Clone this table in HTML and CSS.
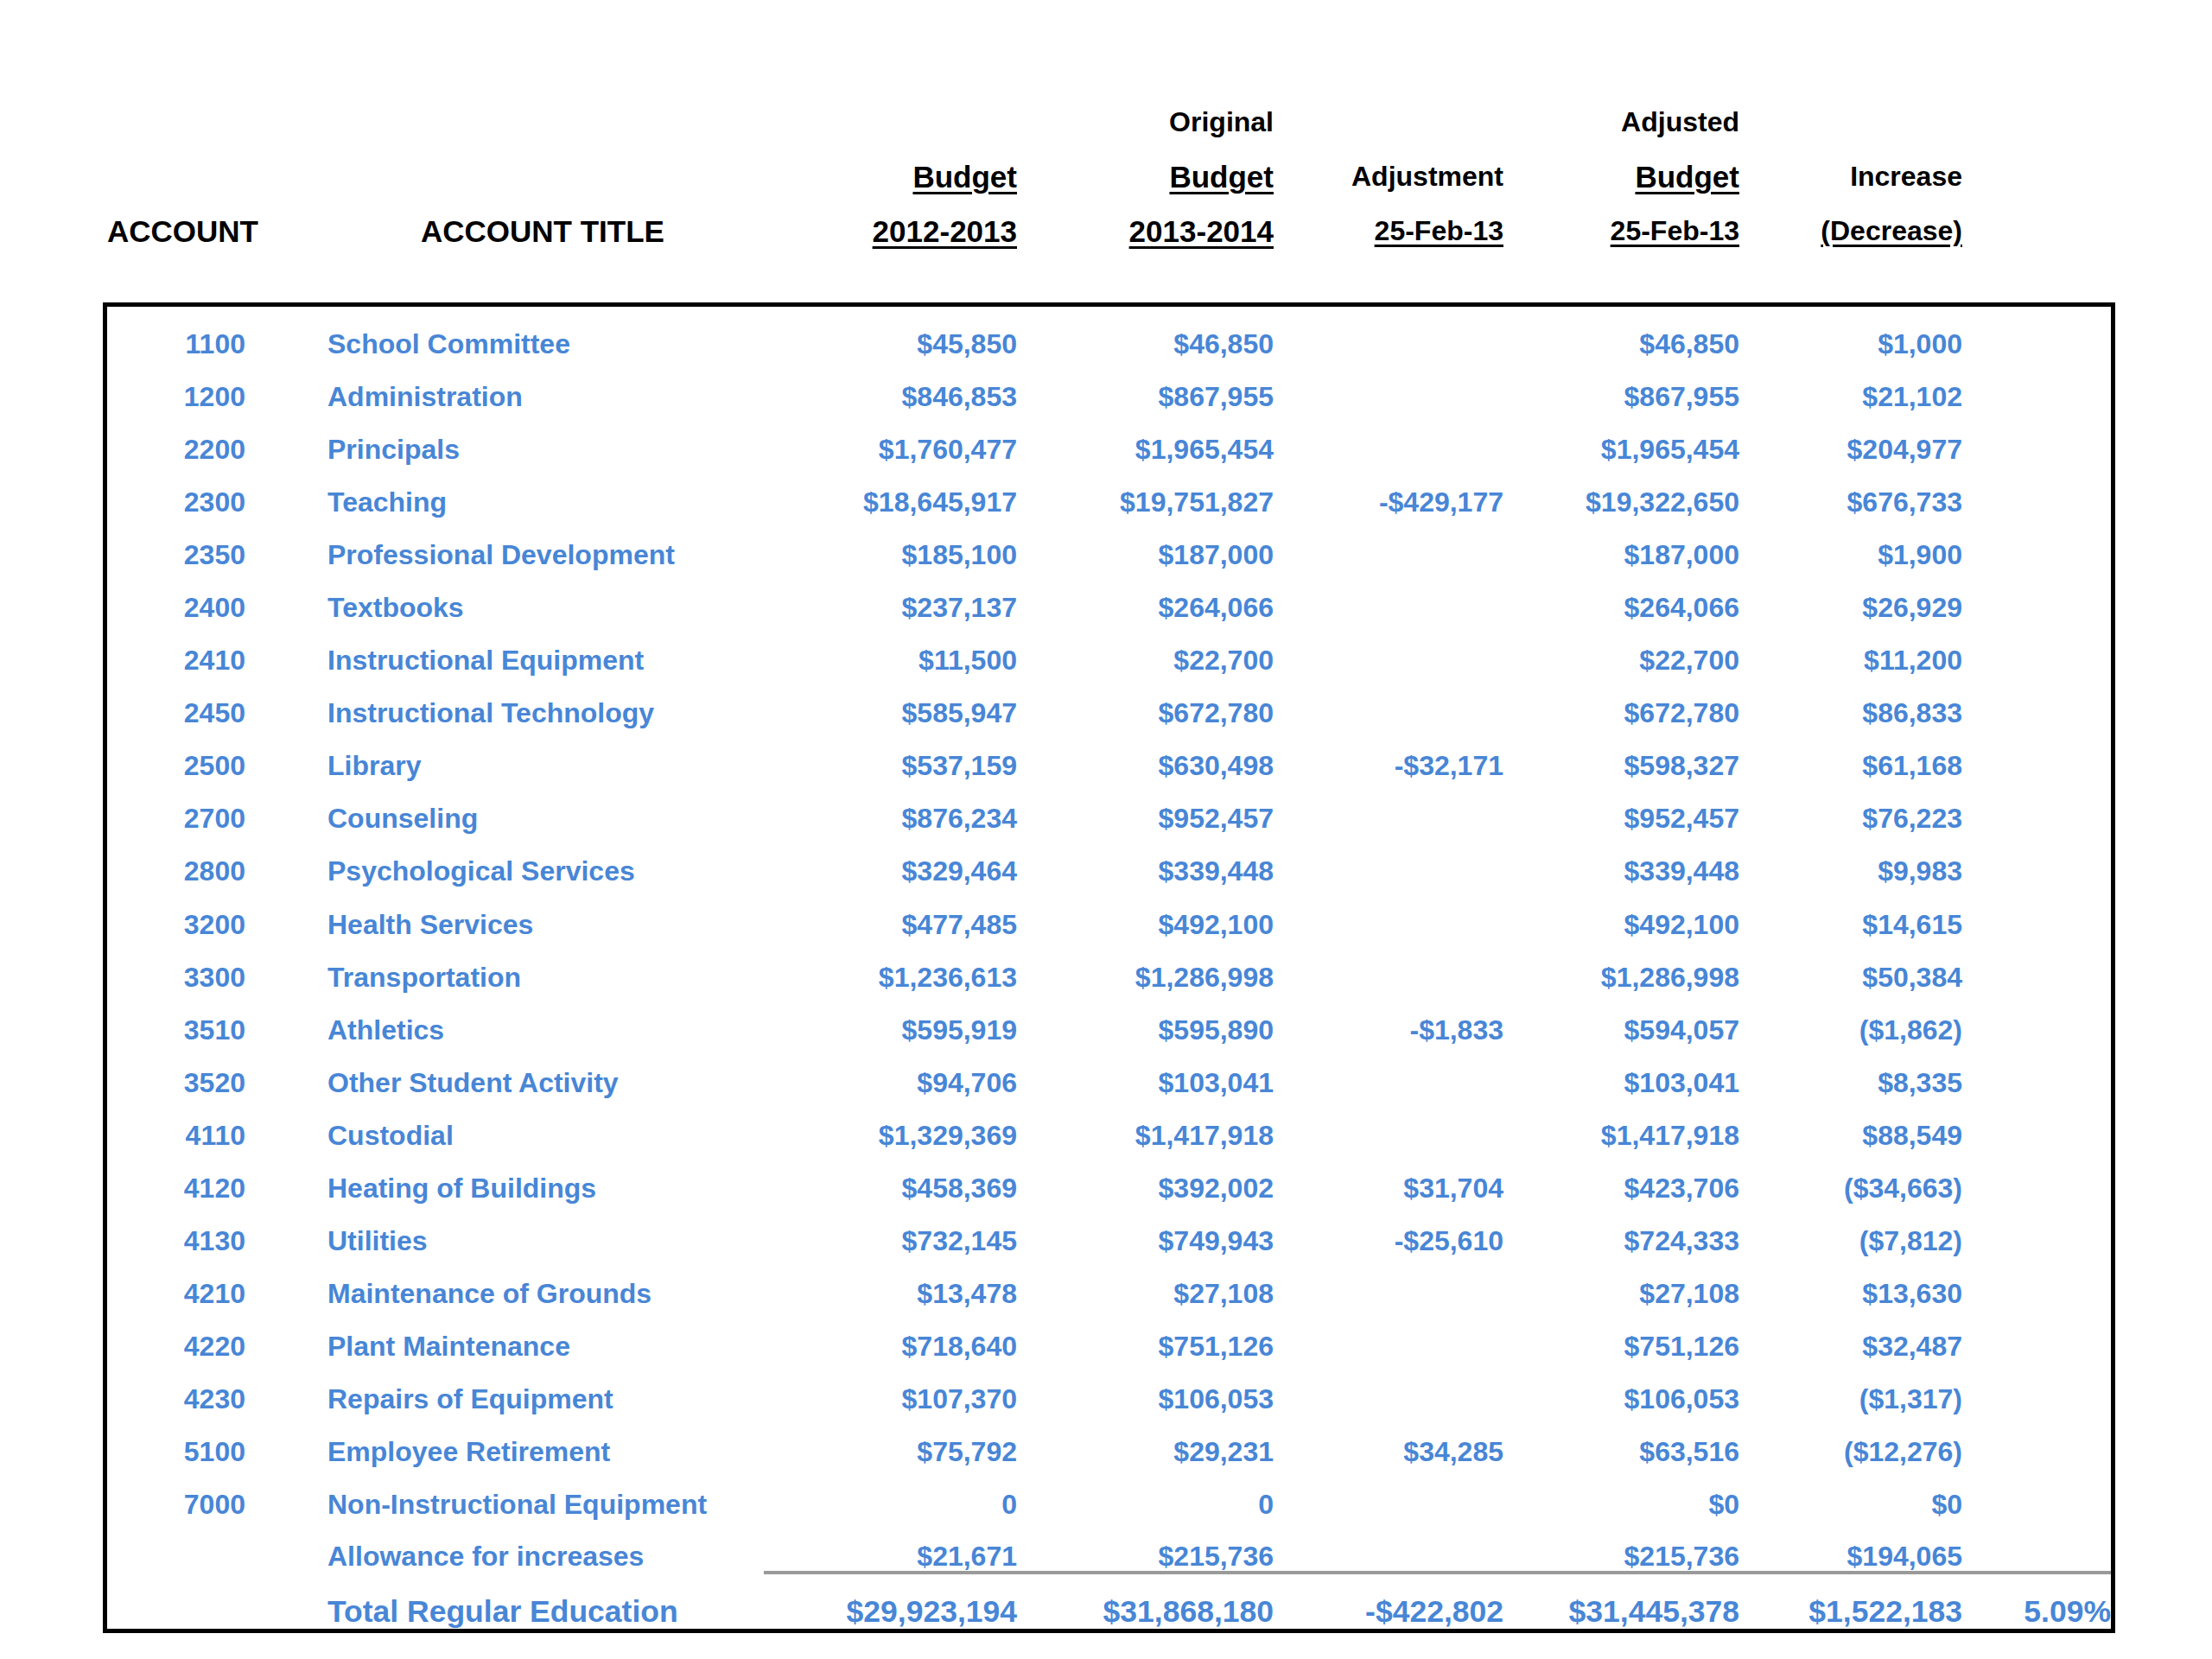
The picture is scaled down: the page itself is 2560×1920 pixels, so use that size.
FILE: index.html
```html
<!DOCTYPE html>
<html lang="en">
<head>
<meta charset="utf-8">
<title>Budget 2013-2014</title>
<link rel="stylesheet" href="styles.css">
</head>
<body>
<div class="page">
  <div class="head">
    <div class="hrow">
      <span></span><span></span><span class="n"></span>
      <span class="n sm">Original</span><span class="n"></span>
      <span class="n sm">Adjusted</span><span class="n"></span><span class="n"></span>
    </div>
    <div class="hrow">
      <span></span><span></span><span class="n"><span class="u">Budget</span></span>
      <span class="n"><span class="u">Budget</span></span><span class="n sm">Adjustment</span>
      <span class="n"><span class="u">Budget</span></span><span class="n sm">Increase</span><span class="n"></span>
    </div>
    <div class="hrow">
      <span>ACCOUNT</span><span class="htitle">ACCOUNT TITLE</span><span class="n"><span class="u">2012-2013</span></span>
      <span class="n"><span class="u">2013-2014</span></span><span class="n sm"><span class="u">25-Feb-13</span></span>
      <span class="n sm"><span class="u">25-Feb-13</span></span><span class="n sm"><span class="u">(Decrease)</span></span><span class="n"></span>
    </div>
  </div>

  <div class="box">
    <div class="row"><span class="acct">1100</span><span class="title">School Committee</span><span class="n">$45,850</span><span class="n">$46,850</span><span class="n"></span><span class="n">$46,850</span><span class="n">$1,000</span><span class="n"></span></div>
    <div class="row"><span class="acct">1200</span><span class="title">Administration</span><span class="n">$846,853</span><span class="n">$867,955</span><span class="n"></span><span class="n">$867,955</span><span class="n">$21,102</span><span class="n"></span></div>
    <div class="row"><span class="acct">2200</span><span class="title">Principals</span><span class="n">$1,760,477</span><span class="n">$1,965,454</span><span class="n"></span><span class="n">$1,965,454</span><span class="n">$204,977</span><span class="n"></span></div>
    <div class="row"><span class="acct">2300</span><span class="title">Teaching</span><span class="n">$18,645,917</span><span class="n">$19,751,827</span><span class="n">-$429,177</span><span class="n">$19,322,650</span><span class="n">$676,733</span><span class="n"></span></div>
    <div class="row"><span class="acct">2350</span><span class="title">Professional Development</span><span class="n">$185,100</span><span class="n">$187,000</span><span class="n"></span><span class="n">$187,000</span><span class="n">$1,900</span><span class="n"></span></div>
    <div class="row"><span class="acct">2400</span><span class="title">Textbooks</span><span class="n">$237,137</span><span class="n">$264,066</span><span class="n"></span><span class="n">$264,066</span><span class="n">$26,929</span><span class="n"></span></div>
    <div class="row"><span class="acct">2410</span><span class="title">Instructional Equipment</span><span class="n">$11,500</span><span class="n">$22,700</span><span class="n"></span><span class="n">$22,700</span><span class="n">$11,200</span><span class="n"></span></div>
    <div class="row"><span class="acct">2450</span><span class="title">Instructional Technology</span><span class="n">$585,947</span><span class="n">$672,780</span><span class="n"></span><span class="n">$672,780</span><span class="n">$86,833</span><span class="n"></span></div>
    <div class="row"><span class="acct">2500</span><span class="title">Library</span><span class="n">$537,159</span><span class="n">$630,498</span><span class="n">-$32,171</span><span class="n">$598,327</span><span class="n">$61,168</span><span class="n"></span></div>
    <div class="row"><span class="acct">2700</span><span class="title">Counseling</span><span class="n">$876,234</span><span class="n">$952,457</span><span class="n"></span><span class="n">$952,457</span><span class="n">$76,223</span><span class="n"></span></div>
    <div class="row"><span class="acct">2800</span><span class="title">Psychological Services</span><span class="n">$329,464</span><span class="n">$339,448</span><span class="n"></span><span class="n">$339,448</span><span class="n">$9,983</span><span class="n"></span></div>
    <div class="row"><span class="acct">3200</span><span class="title">Health Services</span><span class="n">$477,485</span><span class="n">$492,100</span><span class="n"></span><span class="n">$492,100</span><span class="n">$14,615</span><span class="n"></span></div>
    <div class="row"><span class="acct">3300</span><span class="title">Transportation</span><span class="n">$1,236,613</span><span class="n">$1,286,998</span><span class="n"></span><span class="n">$1,286,998</span><span class="n">$50,384</span><span class="n"></span></div>
    <div class="row"><span class="acct">3510</span><span class="title">Athletics</span><span class="n">$595,919</span><span class="n">$595,890</span><span class="n">-$1,833</span><span class="n">$594,057</span><span class="n">($1,862)</span><span class="n"></span></div>
    <div class="row"><span class="acct">3520</span><span class="title">Other Student Activity</span><span class="n">$94,706</span><span class="n">$103,041</span><span class="n"></span><span class="n">$103,041</span><span class="n">$8,335</span><span class="n"></span></div>
    <div class="row"><span class="acct">4110</span><span class="title">Custodial</span><span class="n">$1,329,369</span><span class="n">$1,417,918</span><span class="n"></span><span class="n">$1,417,918</span><span class="n">$88,549</span><span class="n"></span></div>
    <div class="row"><span class="acct">4120</span><span class="title">Heating of Buildings</span><span class="n">$458,369</span><span class="n">$392,002</span><span class="n">$31,704</span><span class="n">$423,706</span><span class="n">($34,663)</span><span class="n"></span></div>
    <div class="row"><span class="acct">4130</span><span class="title">Utilities</span><span class="n">$732,145</span><span class="n">$749,943</span><span class="n">-$25,610</span><span class="n">$724,333</span><span class="n">($7,812)</span><span class="n"></span></div>
    <div class="row"><span class="acct">4210</span><span class="title">Maintenance of Grounds</span><span class="n">$13,478</span><span class="n">$27,108</span><span class="n"></span><span class="n">$27,108</span><span class="n">$13,630</span><span class="n"></span></div>
    <div class="row"><span class="acct">4220</span><span class="title">Plant Maintenance</span><span class="n">$718,640</span><span class="n">$751,126</span><span class="n"></span><span class="n">$751,126</span><span class="n">$32,487</span><span class="n"></span></div>
    <div class="row"><span class="acct">4230</span><span class="title">Repairs of Equipment</span><span class="n">$107,370</span><span class="n">$106,053</span><span class="n"></span><span class="n">$106,053</span><span class="n">($1,317)</span><span class="n"></span></div>
    <div class="row"><span class="acct">5100</span><span class="title">Employee Retirement</span><span class="n">$75,792</span><span class="n">$29,231</span><span class="n">$34,285</span><span class="n">$63,516</span><span class="n">($12,276)</span><span class="n"></span></div>
    <div class="row"><span class="acct">7000</span><span class="title">Non-Instructional Equipment</span><span class="n">0</span><span class="n">0</span><span class="n"></span><span class="n">$0</span><span class="n">$0</span><span class="n"></span></div>
    <div class="row allow"><span class="acct"></span><span class="title">Allowance for increases</span><span class="n">$21,671</span><span class="n">$215,736</span><span class="n"></span><span class="n">$215,736</span><span class="n">$194,065</span><span class="n"></span></div>
    <div class="row total"><span class="acct"></span><span class="title">Total Regular Education</span><span class="n">$29,923,194</span><span class="n">$31,868,180</span><span class="n">-$422,802</span><span class="n">$31,445,378</span><span class="n">$1,522,183</span><span class="n">5.09%</span></div>
  </div>
</div>
</body>
</html>
```

FILE: styles.css
```css
html, body {
  margin: 0;
  padding: 0;
  background: #ffffff;
}

.page {
  padding: 110px 0 0 119px;
  font-family: "Liberation Sans", Arial, Helvetica, sans-serif;
  font-weight: bold;
}

.head {
  width: 2329px;
  box-sizing: border-box;
  padding: 0 5px;
  color: #000000;
  font-size: 35px;
}

.hrow,
.row {
  display: grid;
  grid-template-columns: 255px 505px 293px 297px 266px 273px 258px 172px;
}

.hrow > span {
  line-height: 63px;
  height: 63px;
  white-space: nowrap;
}

.hrow > .sm {
  font-size: 32px;
}

.htitle {
  padding-left: 108px;
}

.n {
  text-align: right;
}

.u {
  text-decoration: underline;
  text-decoration-thickness: 3px;
  text-underline-offset: 5px;
}

.box {
  margin-top: 51px;
  width: 2329px;
  box-sizing: border-box;
  border: 5px solid #000000;
  padding-top: 13px;
  color: #4886d6;
  font-size: 32px;
}

.row > span {
  line-height: 61.05px;
  white-space: nowrap;
}

.acct {
  text-align: right;
  padding-right: 95px;
}

.allow {
  padding-top: 13px;
}

.allow > span {
  line-height: 33px;
}

.allow > .n {
  border-bottom: 4px solid #9a9a9a;
}

.total {
  padding-top: 24px;
  font-size: 35.5px;
}

.total > span {
  line-height: 39px;
}
```
